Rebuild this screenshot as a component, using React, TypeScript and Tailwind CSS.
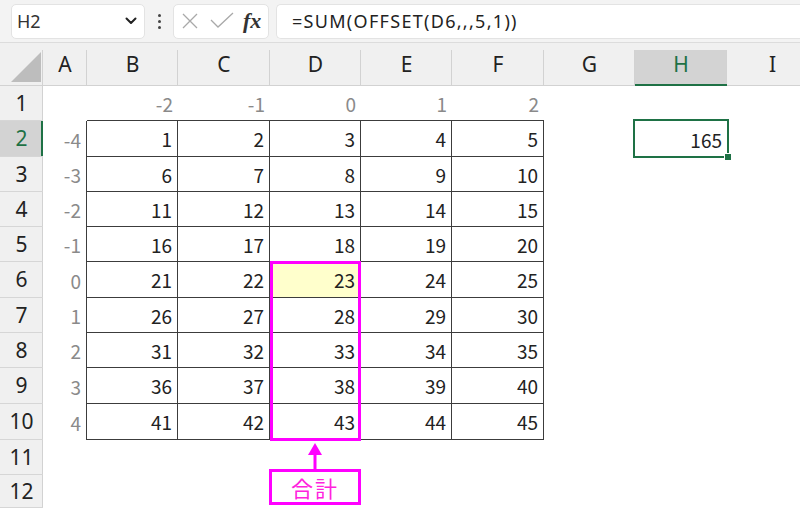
import React from 'react';

const cols = [
    { name: 'A', w: 44 },
    { name: 'B', w: 91 },
    { name: 'C', w: 92 },
    { name: 'D', w: 91 },
    { name: 'E', w: 91 },
    { name: 'F', w: 92 },
    { name: 'G', w: 91 },
    { name: 'H', w: 92 },
    { name: 'I', w: 91 },
];

const rowHeights = [35, 36, 35, 35, 35, 36, 35, 35, 36, 36, 35, 33];

const BORDER = 'border-[#3c3c3c]';

function cellValue(r: number, c: number): { text: string; gray?: boolean } | null {
    // r: 1-based row, c: 0-based column index (0 = A)
    if (r === 1 && c >= 1 && c <= 5) return { text: String(c - 3), gray: true };
    if (r >= 2 && r <= 10 && c === 0) return { text: String(r - 6), gray: true };
    if (r >= 2 && r <= 10 && c >= 1 && c <= 5) return { text: String((r - 2) * 5 + c) };
    if (r === 2 && c === 7) return { text: '165' };
    return null;
}

function Cell({ r, c, w, h }: { r: number; c: number; w: number; h: number }) {
    const v = cellValue(r, c);
    const inTable = r >= 2 && r <= 10 && c >= 1 && c <= 5;
    const cls = [
        'relative flex items-center justify-end pr-[5px] shrink-0',
        inTable ? `border-r border-b ${BORDER}` : '',
        r === 1 && c >= 1 && c <= 5 ? `border-b ${BORDER}` : '',
        c === 0 && r >= 2 && r <= 10 ? `border-r ${BORDER}` : '',
        r === 6 && c === 3 ? 'bg-[#ffffcc]' : '',
        v?.gray ? 'text-[#8a8a8a]' : 'text-[#222]',
    ].join(' ');
    return (
        <div className={cls} style={{ width: w, height: h }}>
            {v && <span className="leading-none">{v.text}</span>}
            {r === 2 && c === 7 && (
                <div className="absolute left-[-2px] top-[-2px] w-[96px] h-[39px] border-2 border-[#1e7145]">
                    <div className="absolute right-[-4px] bottom-[-4px] w-[6px] h-[6px] bg-[#1e7145] outline outline-1 outline-white" />
                </div>
            )}
        </div>
    );
}

export default function App() {
    return (
        <div className="w-[800px] h-[517px] overflow-hidden bg-white font-['Noto_Sans',sans-serif] select-none">
            {/* Formula bar */}
            <div className="h-[43px] bg-[#f3f3f3] border-b border-[#dcdcdc] flex items-center pl-[11px] pr-0 gap-0">
                <div className="w-[134px] h-[35px] bg-white rounded-[5px] border border-[#e3e3e3] flex items-center justify-between pl-[5px] pr-[7px]">
                    <span className="text-[18px] text-[#333] leading-none">H2</span>
                    <svg width="12" height="8" viewBox="0 0 12 8" fill="none" stroke="#222" strokeWidth="2" strokeLinecap="round" strokeLinejoin="round">
                        <path d="M1.5 1.5 6 6l4.5-4.5" />
                    </svg>
                </div>
                <div className="w-[28px] flex flex-col items-center gap-[3px]">
                    <span className="w-[3px] h-[3px] rounded-full bg-[#444]" />
                    <span className="w-[3px] h-[3px] rounded-full bg-[#444]" />
                    <span className="w-[3px] h-[3px] rounded-full bg-[#444]" />
                </div>
                <div className="w-[96px] h-[35px] bg-white rounded-[5px] border border-[#e3e3e3] flex items-center pl-[7px]">
                    <svg width="18" height="18" viewBox="0 0 18 18" fill="none" stroke="#a9a9a9" strokeWidth="1.3">
                        <path d="M2 2l14 14M16 2 2 16" />
                    </svg>
                    <svg className="ml-[11px]" width="24" height="18" viewBox="0 0 24 18" fill="none" stroke="#a9a9a9" strokeWidth="1.3">
                        <path d="M1 8l7 7L23 1" />
                    </svg>
                    <span className="ml-[9px] font-['Liberation_Serif',serif] italic font-bold text-[22px] text-[#333] leading-none">fx</span>
                </div>
                <div className="ml-[7px] flex-1 h-[35px] bg-white rounded-l-[5px] border border-r-0 border-[#e3e3e3] flex items-center pl-[15px]">
                    <span className="text-[18px] text-[#222] leading-none tracking-[1.3px]">=SUM(OFFSET(D6,,,5,1))</span>
                </div>
            </div>

            {/* Column headers */}
            <div className="flex h-[43px] bg-[#f0f0f0] border-b border-[#d2d2d2]">
                <div className="w-[43px] shrink-0 relative">
                    <svg className="absolute left-[11px] top-[9px]" width="30" height="30" viewBox="0 0 30 30">
                        <polygon points="30,0 30,30 0,30" fill="#bdbdbd" />
                    </svg>
                    <div className="absolute right-0 top-[7px] bottom-0 border-r border-[#d2d2d2]" />
                </div>
                {cols.map((col) => {
                    const active = col.name === 'H';
                    return (
                        <div
                            key={col.name}
                            className={`relative shrink-0 flex items-center justify-center text-[21px] leading-none ${active ? 'bg-[#d3d3d3] text-[#1e7145] mt-[7px]' : 'text-[#222]'}`}
                            style={{ width: col.w }}
                        >
                            <span className={active ? '-mt-[7px]' : ''}>{col.name}</span>
                            <div className={`absolute right-0 ${active ? 'top-0' : 'top-[7px]'} bottom-0 border-r border-[#d2d2d2]`} />
                            {active && <div className="absolute left-0 right-0 bottom-[-1px] h-[2px] bg-[#1e7145]" />}
                        </div>
                    );
                })}
            </div>

            {/* Sheet body */}
            <div className="relative font-['Noto_Sans_CJK_JP',sans-serif] text-[19px]">
                {rowHeights.map((h, i) => {
                    const r = i + 1;
                    const active = r === 2;
                    return (
                        <div key={r} className="flex" style={{ height: h }}>
                            <div
                                className={`relative w-[43px] shrink-0 flex items-center justify-center border-b border-[#d6d6d6] text-[21px] font-['Noto_Sans',sans-serif] ${active ? 'bg-[#d3d3d3] text-[#1e7145]' : 'bg-[#f0f0f0] text-[#222]'}`}
                            >
                                <span className="leading-none">{r}</span>
                                <div className={`absolute right-0 top-0 bottom-0 ${active ? 'w-[2px] bg-[#1e7145]' : 'border-r border-[#d2d2d2]'}`} />
                            </div>
                            {cols.map((col, c) => (
                                <Cell key={col.name} r={r} c={c} w={col.w} h={h} />
                            ))}
                        </div>
                    );
                })}

                {/* Annotation: highlight D6:D10 */}
                <div className="absolute left-[270px] top-[175px] w-[91px] h-[180px] border-[3px] border-[#ff00ff]" />
                {/* Arrow */}
                <svg className="absolute left-[307px] top-[356px]" width="16" height="28" viewBox="0 0 16 28">
                    <polygon points="8,1 15,13 1,13" fill="#ff00ff" />
                    <rect x="6.5" y="12" width="3" height="16" fill="#ff00ff" />
                </svg>
                {/* Label */}
                <div className="absolute left-[269px] top-[383px] w-[92px] h-[36px] border-[3px] border-[#ff00ff] bg-white flex items-center justify-center">
                    <span className="text-[22px] text-[#ff22dd] leading-none tracking-[2px]">合計</span>
                </div>
            </div>
        </div>
    );
}
